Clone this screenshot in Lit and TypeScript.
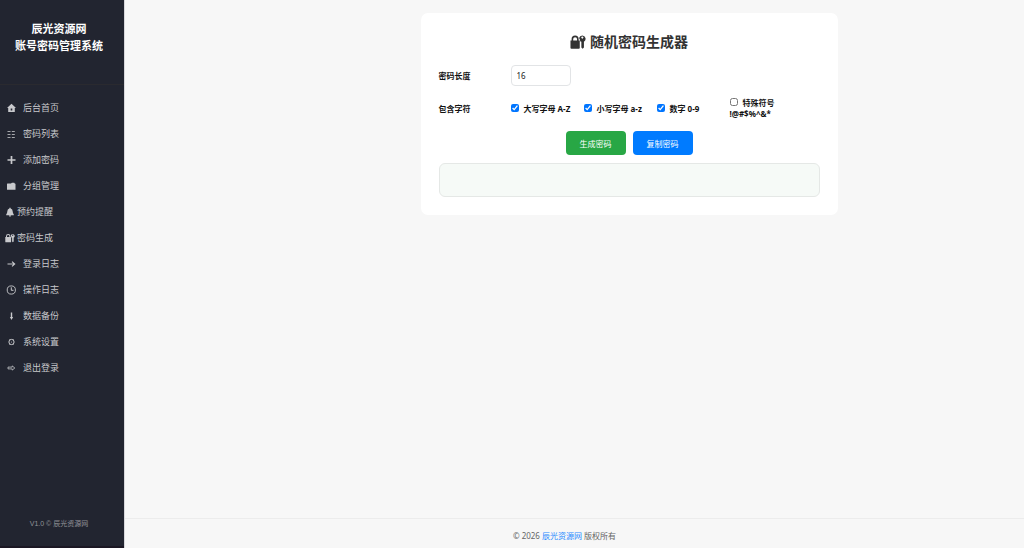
import { LitElement, html, css, svg } from "lit";
import { customElement, state } from "lit/decorators.js";

const icons: Record<string, unknown> = {
  home: svg`<path fill="currentColor" fill-rule="evenodd" d="M5.500.8 10 5H8.800V9H2.200V5H1ZM4.700 5.500v2h1.600v-2Z"/>`,
  list: svg`<path stroke="currentColor" stroke-width=".8" fill="none" d="M1.500 2.500h3M5.800 2.500h3M1.500 5.500h3M5.800 5.500h3M1.500 8.500h3M5.800 8.500h3"/>`,
  plus: svg`<path stroke="currentColor" stroke-width="1.700" d="M5.500 1v8M1.500 5h8"/>`,
  folder: svg`<path fill="currentColor" d="M1 3Q1 2.500 1.500 2.500H5l.9-.7h2.400l.6 1h.6v6H1Z"/>`,
  bell: svg`<path fill="currentColor" d="M4.400.7h1.200v.8Q7.700 2 7.700 4.600q0 1.600 1.100 2.800v.8H1.200v-.8Q2.300 6.200 2.300 4.600 2.300 2 4.400 1.500ZM3.800 8.600h2.400Q6 9.700 5 9.700T3.800 8.600Z"/>`,
  lock: svg`<path fill="currentColor" fill-rule="evenodd" d="M.3 4H1V3.200a2.200 2.200 0 0 1 4.400 0V4h.7v4.700q0 .5-.6.500H.9q-.6 0-.6-.500ZM2 4h2.400V3.200a1.200 1.200 0 0 0-2.400 0Z"/><path fill="currentColor" fill-rule="evenodd" d="M7.700.9a2.100 2.100 0 0 1 1 3.900v3.600l-.8.800-.8-.800V4.800L6.300 4.500V3.800Q5.900 3.200 5.700 2.500A2.100 2.100 0 0 1 7.700.9Zm0 .7a.6.600 0 1 0 .01 0Z"/>`,
  right: svg`<path stroke="currentColor" stroke-width="1.100" fill="none" d="M1.500 5h7M6 2.600 8.700 5 6 7.400"/>`,
  clock: svg`<circle cx="5.300" cy="5" r="4.100" stroke="currentColor" stroke-width=".9" fill="none"/><path stroke="currentColor" fill="none" d="M5.300 2.300V5.300H7.500"/>`,
  down: svg`<path stroke="currentColor" stroke-width="1.400" d="M5.500 1.500V7"/><path fill="currentColor" d="M3.900 6h3.200L5.500 9Z"/>`,
  gear: svg`<circle cx="5.500" cy="5" r="2.600" stroke="currentColor" fill="none"/><circle cx="5.500" cy="5" r=".5" fill="currentColor"/><path stroke="currentColor" stroke-width=".8" d="M3.500 2 4.100 2.900M7.500 2 6.900 2.900M3.500 8 4.100 7.100M7.500 8 6.900 7.100"/>`,
  exit: svg`<path stroke="currentColor" stroke-width=".8" fill="none" d="M2 4.100H6.200V2.900L8.800 5 6.200 7.100V5.900H2Z"/>`,
};

const icon = (name: string) =>
  html`<svg class="icon" viewBox="0 0 10 10" aria-hidden="true">${icons[name]}</svg>`;

const menu = [
  { icon: "home", text: "后台首页" },
  { icon: "list", text: "密码列表" },
  { icon: "plus", text: "添加密码" },
  { icon: "folder", text: "分组管理" },
  { icon: "bell", text: "预约提醒", compact: true },
  { icon: "lock", text: "密码生成", compact: true },
  { icon: "right", text: "登录日志" },
  { icon: "clock", text: "操作日志" },
  { icon: "down", text: "数据备份" },
  { icon: "gear", text: "系统设置" },
  { icon: "exit", text: "退出登录" },
];

@customElement("side-menu")
class SideMenu extends LitElement {
  static styles = css`
    :host {
      display: flex;
      flex-direction: column;
      background: #222530;
      color: #c8c9cc;
      border-right: 1px solid #d8d8dc;
      box-shadow: inset 0 -2px #1b1723;
      box-sizing: border-box;
      font-family: "Liberation Sans", "Noto Sans CJK SC", sans-serif;
    }
    .brand {
      padding: 21px 8px 29px;
      margin-right: 6px;
      text-align: center;
      font-size: 11px;
      line-height: 17px;
      font-weight: 700;
      color: #fff;
    }
    .divider {
      border-top: 1px solid #2a2a2f;
    }
    .menu {
      list-style: none;
      margin: 0;
      padding: 10px 0 0;
    }
    .link {
      display: flex;
      align-items: center;
      gap: 7px;
      padding-left: 6px;
      font-size: 9px;
      line-height: 26px;
      color: inherit;
      text-decoration: none;
    }
    .compact {
      gap: 2px;
      padding-left: 5px;
    }
    .icon {
      width: 10px;
      height: 10px;
    }
    .version {
      margin-top: auto;
      padding: 0 6px 17px 0;
      text-align: center;
      font-size: 7px;
      line-height: 14px;
      color: #929398;
    }
  `;
  render() {
    return html`
      <div class="brand">辰光资源网<br />账号密码管理系统</div>
      <div class="divider"></div>
      <nav>
        <ul class="menu">
          ${menu.map(
            (m) => html`<li>
              <a class="link ${m.compact ? "compact" : ""}" href="#">${icon(m.icon)}<span>${m.text}</span></a>
            </li>`
          )}
        </ul>
      </nav>
      <div class="version">V1.0 © 辰光资源网</div>
    `;
  }
}

const sets = [
  { id: "upper", text: "大写字母 A-Z", chars: "ABCDEFGHIJKLMNOPQRSTUVWXYZ" },
  { id: "lower", text: "小写字母 a-z", chars: "abcdefghijklmnopqrstuvwxyz" },
  { id: "digits", text: "数字 0-9", chars: "0123456789" },
  { id: "symbols", text: "特殊符号 !@#$%^&*", chars: "!@#$%^&*" },
];

@customElement("password-generator")
class PasswordGenerator extends LitElement {
  @state() length = 16;
  @state() chosen = new Set(["upper", "lower", "digits"]);
  @state() password = "";

  static styles = css`
    :host {
      display: block;
      box-sizing: border-box;
      padding: 18px;
      border-radius: 7px;
      background: #fff;
      color: #111;
      font-size: 8px;
      line-height: 11px;
    }
    .title {
      display: flex;
      justify-content: center;
      align-items: center;
      gap: 4px;
      margin: 0 0 12px;
      font-size: 14px;
      line-height: 22px;
      color: #333;
    }
    .icon {
      width: 16px;
      height: 16px;
    }
    .row {
      display: grid;
      grid-template-columns: 72px 1fr;
      align-items: center;
      font-weight: 700;
    }
    .length {
      width: 60px;
      height: 21px;
      box-sizing: border-box;
      padding: 0 5px;
      border: 1px solid #e2e4e6;
      border-radius: 4px;
      font: inherit;
      font-weight: 400;
      color: #222;
      background: #fff;
    }
    .sets {
      display: grid;
      grid-template-columns: repeat(4, 73px);
      align-items: center;
      margin: 11px 0 12px;
    }
    .set {
      white-space: nowrap;
    }
    .set:last-child {
      white-space: normal;
    }
    .box {
      width: 8px;
      height: 8px;
      margin: 0 5px 0 0;
      vertical-align: 0;
    }
    .actions {
      display: flex;
      justify-content: center;
      gap: 7px;
      margin-bottom: 8px;
    }
    .button {
      min-width: 60px;
      height: 24px;
      padding: 0 12px;
      border: 0;
      border-radius: 4px;
      font: inherit;
      color: #fff;
      background: #28a745;
    }
    .copy {
      background: #007bff;
    }
    .result {
      display: block;
      box-sizing: border-box;
      min-height: 34px;
      padding: 10px;
      border: 1px solid #e5e8e6;
      border-radius: 6px;
      background: #f6faf7;
      font-size: 11px;
      text-align: center;
      overflow-wrap: anywhere;
    }
  `;

  private toggle(id: string) {
    const next = new Set(this.chosen);
    if (!next.delete(id)) next.add(id);
    this.chosen = next;
  }

  private generate() {
    const pool = sets.filter((s) => this.chosen.has(s.id)).map((s) => s.chars).join("");
    if (!pool) return;
    const values = crypto.getRandomValues(new Uint32Array(this.length));
    this.password = Array.from(values, (v) => pool[v % pool.length]).join("");
  }

  render() {
    return html`
      <h2 class="title">${icon("lock")}<span>随机密码生成器</span></h2>
      <div class="row">
        <label for="length">密码长度</label>
        <input
          id="length"
          class="length"
          type="number"
          min="4"
          max="64"
          .value=${String(this.length)}
          @change=${(e: Event) => (this.length = Number((e.target as HTMLInputElement).value))}
        />
      </div>
      <div class="row">
        <span id="sets-label">包含字符</span>
        <div class="sets" role="group" aria-labelledby="sets-label">
          ${sets.map(
            (s) => html`<label class="set"
              ><input
                class="box"
                type="checkbox"
                .checked=${this.chosen.has(s.id)}
                @change=${() => this.toggle(s.id)}
              />${s.text}</label
            >`
          )}
        </div>
      </div>
      <div class="actions">
        <button class="button" @click=${this.generate}>生成密码</button>
        <button class="button copy" @click=${() => navigator.clipboard?.writeText(this.password)}>复制密码</button>
      </div>
      <output class="result">${this.password}</output>
    `;
  }
}

@customElement("app-root")
class AppRoot extends LitElement {
  static styles = css`
    :host {
      display: grid;
      grid-template-columns: 125px 1fr;
      min-height: 100vh;
      background: #f7f7f7;
      font-family: "Noto Sans", "Noto Sans CJK SC", sans-serif;
    }
    .page {
      display: flex;
      flex-direction: column;
      min-width: 0;
    }
    .content {
      flex: 1;
      padding: 13px 0 13px 109px;
    }
    .card {
      max-width: 417px;
      margin: 0 auto;
    }
    .footer {
      padding: 8px 20px 3px 0;
      border-top: 1px solid #ececec;
      text-align: center;
      font-size: 8px;
      line-height: 18px;
      color: #666;
    }
    .site {
      color: #1e88ff;
      text-decoration: none;
    }
  `;
  render() {
    return html`
      <side-menu></side-menu>
      <div class="page">
        <main class="content"><password-generator class="card"></password-generator></main>
        <footer class="footer">© 2026 <a class="site" href="#">辰光资源网</a> 版权所有</footer>
      </div>
    `;
  }
}
